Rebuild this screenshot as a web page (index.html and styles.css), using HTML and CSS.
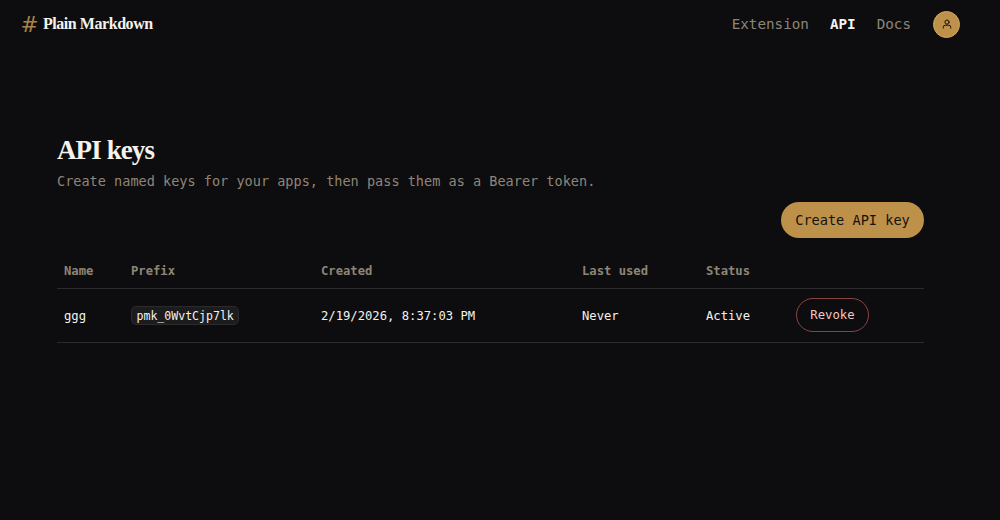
FILE: index.html
```html
<!DOCTYPE html>
<html lang="en">
<head>
<meta charset="utf-8">
<title>API keys - Plain Markdown</title>
<link rel="stylesheet" href="styles.css">
</head>
<body>
<header class="topbar">
  <a class="brand"><span class="brand-mark">#</span><span class="brand-name">Plain Markdown</span></a>
  <nav class="nav">
    <a class="nav-link">Extension</a>
    <a class="nav-link active">API</a>
    <a class="nav-link">Docs</a>
    <span class="avatar">
      <svg width="10" height="10" viewBox="0 0 24 24" fill="none" stroke="#14120e" stroke-width="2.4" stroke-linecap="round" stroke-linejoin="round"><circle cx="12" cy="7.5" r="5"/><path d="M3 22v-2a5 5 0 0 1 5-5h8a5 5 0 0 1 5 5v2"/></svg>
    </span>
  </nav>
</header>
<main class="page">
  <h1 class="title">API keys</h1>
  <p class="subtitle">Create named keys for your apps, then pass them as a Bearer token.</p>
  <div class="actions"><button class="btn-primary">Create API key</button></div>
  <table class="keys">
    <colgroup>
      <col class="c1"><col class="c2"><col class="c3"><col class="c4"><col class="c5"><col class="c6">
    </colgroup>
    <thead>
      <tr><th>Name</th><th>Prefix</th><th>Created</th><th>Last used</th><th>Status</th><th></th></tr>
    </thead>
    <tbody>
      <tr>
        <td>ggg</td>
        <td class="cell-box"><code class="prefix">pmk_0WvtCjp7lk</code></td>
        <td>2/19/2026, 8:37:03 PM</td>
        <td>Never</td>
        <td>Active</td>
        <td class="cell-box"><button class="btn-revoke">Revoke</button></td>
      </tr>
    </tbody>
  </table>
</main>
</body>
</html>
```
FILE: styles.css
```css
* { box-sizing: border-box; }
html, body { margin: 0; height: 100%; }
body {
  background: #0d0d0f;
  color: #f5f2ec;
  font-family: "DejaVu Sans Mono", "Liberation Mono", monospace;
  overflow: hidden;
}
.topbar {
  height: 48px;
  display: flex;
  align-items: center;
  justify-content: space-between;
  padding: 0 40px 0 22px;
}
.brand { display: flex; align-items: center; gap: 6px; }
.brand-mark {
  color: #a9834a;
  font-family: "DejaVu Sans", sans-serif;
  font-size: 18px;
  transform: scale(1.2);
  width: 15px;
}
.brand-name {
  font-family: "Liberation Serif", serif;
  font-weight: 700;
  font-size: 16px;
  letter-spacing: -0.45px;
  color: #f5f2ec;
}
.nav { display: flex; align-items: center; gap: 21px; }
.nav-link { font-size: 14.25px; color: #8f8577; }
.nav-link.active { color: #f5f2ec; font-weight: 700; }
.avatar {
  width: 27px;
  height: 27px;
  margin-left: 1px;
  border-radius: 50%;
  background: #bd9149;
  border: 1px solid #d3a85f;
  display: flex;
  align-items: center;
  justify-content: center;
}
.page { padding: 86px 76px 0 57px; }
.title {
  margin: 0;
  font-family: "Liberation Serif", serif;
  font-weight: 700;
  font-size: 27px;
  letter-spacing: -0.9px;
  line-height: 32px;
  color: #f5f2ec;
}
.subtitle {
  margin: 6px 0 0;
  font-size: 13.55px;
  line-height: 18px;
  color: #8f8577;
}
.actions { display: flex; justify-content: flex-end; margin-top: 12px; }
.btn-primary {
  height: 36px;
  width: 143px;
  padding: 0;
  border: 0;
  border-radius: 18px;
  background: #bd9149;
  color: #14120e;
  font-family: inherit;
  font-size: 13.6px;
}
.keys {
  width: 867px;
  margin-top: 15px;
  border-collapse: collapse;
  table-layout: fixed;
  font-size: 12.2px;
}
.c1 { width: 67px; }
.c2 { width: 190px; }
.c3 { width: 261px; }
.c4 { width: 124px; }
.c5 { width: 90px; }
.c6 { width: 135px; }
.keys th {
  height: 35px;
  padding: 2px 0 0 7px;
  text-align: left;
  font-weight: 700;
  color: #8f8577;
  border-bottom: 1px solid #2c2b2b;
}
.keys td {
  height: 54px;
  padding: 2px 0 0 7px;
  color: #f5f2ec;
  border-bottom: 1px solid #2c2b2b;
}
.keys .cell-box { padding-top: 0; }
.prefix {
  display: inline-block;
  padding: 1px 4.5px 0;
  font-family: inherit;
  font-size: 11.55px;
  line-height: 16px;
  background: #1c1c1e;
  border: 1px solid #2c2b2b;
  border-radius: 5px;
}
.btn-revoke {
  display: block;
  width: 73px;
  height: 34px;
  padding: 0;
  background: transparent;
  border: 1px solid #8a4440;
  border-radius: 17px;
  color: #f7c5bf;
  font-family: inherit;
  font-size: 12.25px;
}
```
